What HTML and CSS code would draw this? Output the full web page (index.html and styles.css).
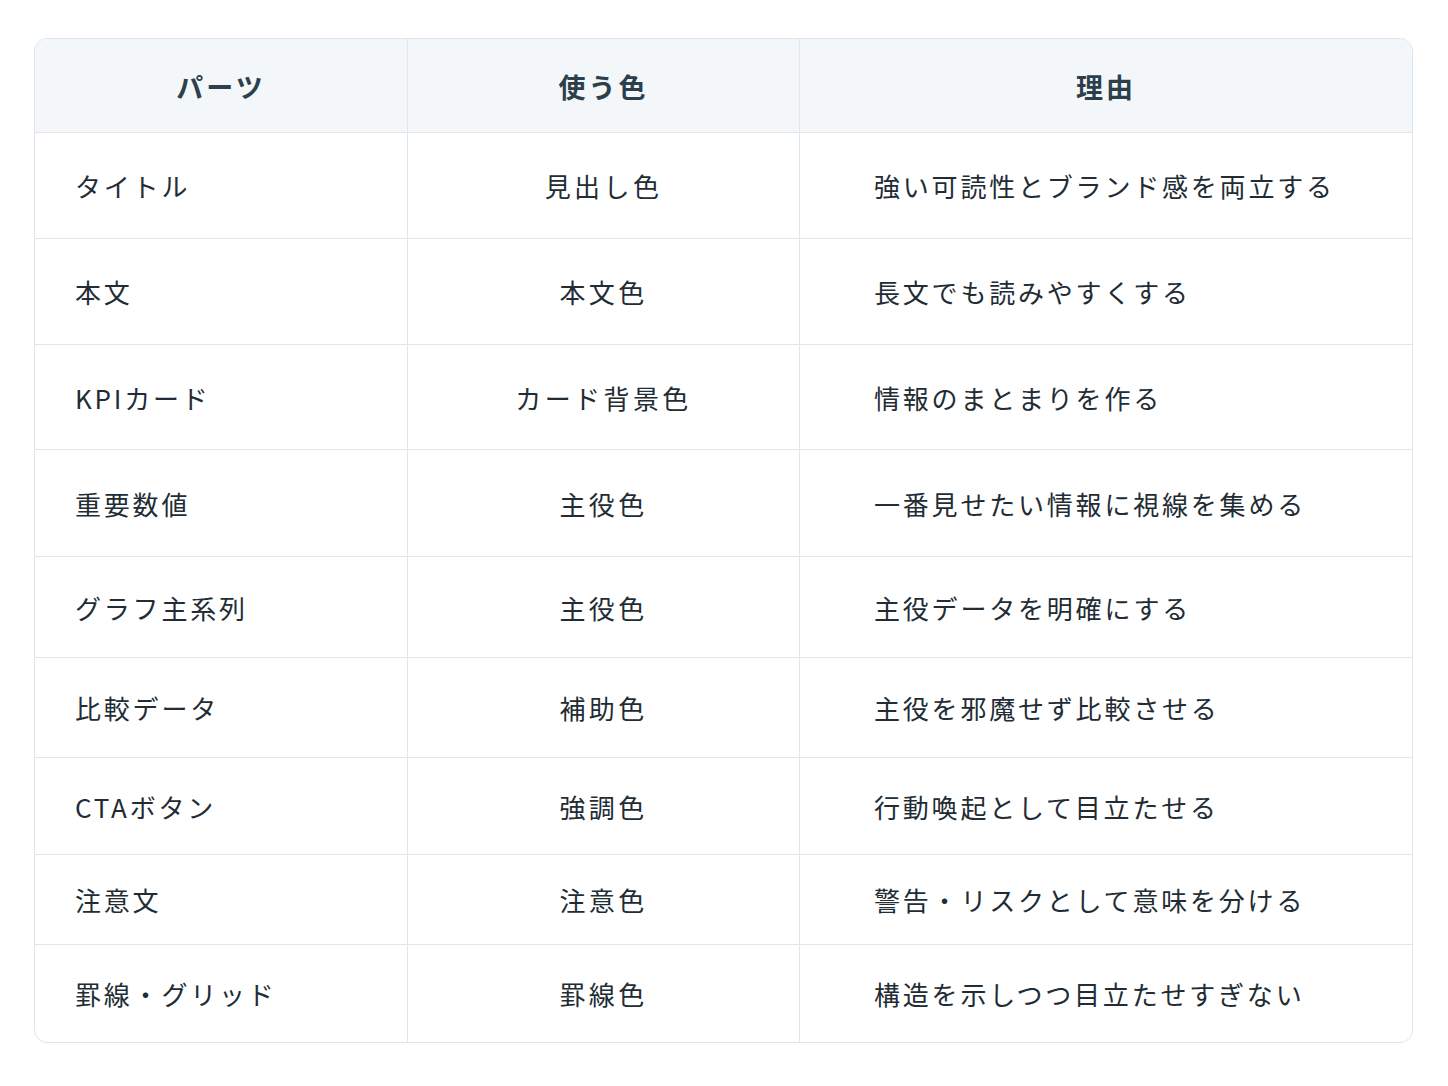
FILE: index.html
```html
<!DOCTYPE html>
<html lang="ja">
<head>
<meta charset="utf-8">
<title>配色表</title>
<link rel="stylesheet" href="styles.css">
</head>
<body>
<div class="card">
  <table class="tbl">
    <colgroup>
      <col class="c1"><col class="c2"><col class="c3">
    </colgroup>
    <thead>
      <tr><th>パーツ</th><th>使う色</th><th>理由</th></tr>
    </thead>
    <tbody>
      <tr><td>タイトル</td><td>見出し色</td><td>強い可読性とブランド感を両立する</td></tr>
      <tr><td>本文</td><td>本文色</td><td>長文でも読みやすくする</td></tr>
      <tr><td>KPIカード</td><td>カード背景色</td><td>情報のまとまりを作る</td></tr>
      <tr><td>重要数値</td><td>主役色</td><td>一番見せたい情報に視線を集める</td></tr>
      <tr><td>グラフ主系列</td><td>主役色</td><td>主役データを明確にする</td></tr>
      <tr><td>比較データ</td><td>補助色</td><td>主役を邪魔せず比較させる</td></tr>
      <tr><td>CTAボタン</td><td>強調色</td><td>行動喚起として目立たせる</td></tr>
      <tr><td>注意文</td><td>注意色</td><td>警告・リスクとして意味を分ける</td></tr>
      <tr><td>罫線・グリッド</td><td>罫線色</td><td>構造を示しつつ目立たせすぎない</td></tr>
    </tbody>
  </table>
</div>
</body>
</html>
```

FILE: styles.css
```css
html, body {
  margin: 0;
  padding: 0;
  background: #ffffff;
}
body {
  padding: 38px 34px 0 34px;
  font-family: "Noto Sans CJK JP", "Noto Sans", sans-serif;
}
.card {
  width: 1377px;
  border: 1px solid #dfe4ea;
  border-radius: 13px;
  overflow: hidden;
  background: #ffffff;
}
.tbl {
  width: 100%;
  border-collapse: separate;
  border-spacing: 0;
  table-layout: fixed;
}
.c1 { width: 373px; }
.c2 { width: 392px; }
.c3 { width: auto; }
th, td {
  padding: 0;
  border-right: 1px solid #e1e6eb;
  border-bottom: 1px solid #e1e6eb;
  vertical-align: middle;
  white-space: nowrap;
}
th:last-child, td:last-child { border-right: none; }
tbody tr:last-child td { border-bottom: none; }
th {
  height: 92px;
  background: #f4f7f9;
  color: #2e3f4c;
  font-size: 27px;
  font-weight: 700;
  letter-spacing: 3px;
  text-align: center;
  padding-top: 1px;
}
td {
  color: #222c34;
  font-size: 26px;
  font-weight: 400;
  letter-spacing: 2.8px;
}
td:nth-child(1) { padding-left: 40px; text-align: left; }
td:nth-child(2) { text-align: center; letter-spacing: 3.4px; }
td:nth-child(3) { padding-left: 74px; text-align: left; }
tbody tr:nth-child(1) td { height: 105px; }
tbody tr:nth-child(2) td { height: 105px; }
tbody tr:nth-child(3) td { height: 104px; }
tbody tr:nth-child(4) td { height: 106px; }
tbody tr:nth-child(5) td { height: 100px; }
tbody tr:nth-child(6) td { height: 99px; }
tbody tr:nth-child(7) td { height: 96px; }
tbody tr:nth-child(8) td { height: 89px; }
tbody tr:nth-child(9) td { height: 97px; }
```
